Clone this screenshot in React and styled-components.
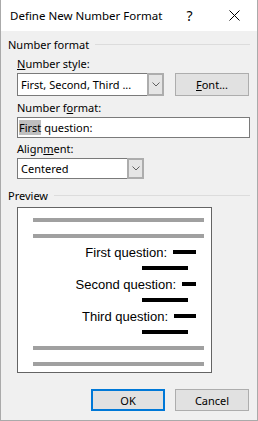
import { Fragment } from "react";
import styled, { createGlobalStyle } from "styled-components";

const GlobalStyle = createGlobalStyle`
  html, body {
    margin: 0;
    padding: 0;
    background: #ffffff;
  }
  * {
    box-sizing: border-box;
  }
`;

const Window = styled.div`
  width: 258px;
  height: 421px;
  background: #f0f0f0;
  border: 1px solid #aaaaaa;
  border-top: none;
  display: flex;
  flex-direction: column;
  font-family: "Noto Sans", "Open Sans", sans-serif;
  font-size: 11px;
  color: #000000;
`;

const TitleBar = styled.div`
  height: 31px;
  background: #ffffff;
  display: flex;
  align-items: center;
  padding-left: 9px;
`;

const Title = styled.div`
  flex: 1;
  line-height: 16px;
  font-size: 11.5px;
  white-space: nowrap;
`;

const TitleButton = styled.div`
  width: 45px;
  height: 31px;
  display: flex;
  align-items: center;
  justify-content: center;
  font-size: 14px;
`;

const Body = styled.div`
  flex: 1;
  display: flex;
  flex-direction: column;
  padding: 5px 7px 0 7px;
`;

const GroupHeader = styled.div`
  display: flex;
  align-items: center;
  height: 16px;
  margin-top: ${(p) => p.$top || 0}px;

  &::after {
    content: "";
    flex: 1;
    height: 1px;
    background: #dcdcdc;
    margin-left: 6px;
  }
`;

const Group = styled.div`
  display: flex;
  flex-direction: column;
  padding-left: 9px;
`;

const Label = styled.div`
  line-height: 16px;
  margin-top: ${(p) => p.$top || 0}px;
  margin-bottom: 1px;
`;

const Row = styled.div`
  display: flex;
  gap: 11px;
`;

const Combo = styled.div`
  width: ${(p) => p.$width}px;
  height: ${(p) => p.$height}px;
  display: flex;
  border: 1px solid #7a7a7a;
  background: #ffffff;
`;

const ComboValue = styled.div`
  flex: 1;
  display: flex;
  align-items: center;
  padding-left: 3px;
  white-space: nowrap;
  overflow: hidden;
`;

const DropButton = styled.div`
  width: 17px;
  margin: -1px -1px -1px 0;
  border: 2px solid #adadad;
  background: #e5e5e5;
  display: flex;
  align-items: center;
  justify-content: center;
`;

const Button = styled.div`
  width: 74px;
  height: ${(p) => p.$height || 22}px;
  background: #e1e1e1;
  border: ${(p) => (p.$default ? "2px solid #0078d7" : "1px solid #adadad")};
  display: flex;
  align-items: center;
  justify-content: center;
`;

const TextBox = styled.div`
  width: 233px;
  height: 21px;
  border: 1px solid #7a7a7a;
  background: #ffffff;
  display: flex;
  align-items: center;
  padding-left: 1px;
  white-space: nowrap;
`;

const Selected = styled.span`
  background: #bfbfbf;
`;

const PreviewBox = styled.div`
  width: 195px;
  height: 166px;
  margin-top: 4px;
  border: 1px solid #646464;
  background: #ffffff;
  padding: 4px 7px 0 15px;
  display: flex;
  flex-direction: column;
  font-family: "Liberation Sans", Arial, sans-serif;
  font-size: 13px;
`;

const Slot = styled.div`
  height: 16px;
  display: flex;
  align-items: center;
  justify-content: flex-end;
  padding-right: ${(p) => p.$right || 0}px;
  white-space: nowrap;
`;

const Bar = styled.div`
  height: 4px;
  width: ${(p) => (p.$width ? `${p.$width}px` : "100%")};
  background: ${(p) => (p.$gray ? "#a0a0a0" : "#000000")};
  margin-left: ${(p) => p.$gap || 0}px;
`;

const Footer = styled.div`
  margin-top: auto;
  display: flex;
  justify-content: flex-end;
  gap: 10px;
  padding: 0 1px 9px 0;
`;

const CloseIcon = () => (
  <svg width="11" height="11" viewBox="0 0 11 11">
    <path d="M0.5 0.5 L10.5 10.5 M10.5 0.5 L0.5 10.5" stroke="#000" strokeWidth="1" />
  </svg>
);

const Chevron = () => (
  <svg width="8" height="5" viewBox="0 0 8 5">
    <path d="M0.5 0.5 L4 4 L7.5 0.5" stroke="#606060" strokeWidth="1" fill="none" />
  </svg>
);

const items = [
  { text: "First question:", bar: 23 },
  { text: "Second question:", bar: 14 },
  { text: "Third question:", bar: 22 },
];

export default function App() {
  return (
    <>
      <GlobalStyle />
      <Window>
        <TitleBar>
          <Title>Define New Number Format</Title>
          <TitleButton>?</TitleButton>
          <TitleButton>
            <CloseIcon />
          </TitleButton>
        </TitleBar>
        <Body>
          <GroupHeader>Number format</GroupHeader>
          <Group>
            <Label $top={4}>
              <u>N</u>umber style:
            </Label>
            <Row>
              <Combo $width={147} $height={23}>
                <ComboValue>First, Second, Third ...</ComboValue>
                <DropButton>
                  <Chevron />
                </DropButton>
              </Combo>
              <Button $height={23}>
                <span>
                  <u>F</u>ont...
                </span>
              </Button>
            </Row>
            <Label $top={4}>
              Number f<u>o</u>rmat:
            </Label>
            <TextBox>
              <Selected>First</Selected>&nbsp;question:
            </TextBox>
            <Label $top={3}>
              Align<u>m</u>ent:
            </Label>
            <Combo $width={127} $height={21}>
              <ComboValue>Centered</ComboValue>
              <DropButton>
                <Chevron />
              </DropButton>
            </Combo>
          </Group>
          <GroupHeader $top={8}>Preview</GroupHeader>
          <Group>
            <PreviewBox>
              <Slot>
                <Bar $gray />
              </Slot>
              <Slot>
                <Bar $gray />
              </Slot>
              {items.map((it) => (
                <Fragment key={it.text}>
                  <Slot $right={8}>
                    {it.text}
                    <Bar $width={it.bar} $gap={6} />
                  </Slot>
                  <Slot $right={16}>
                    <Bar $width={46} />
                  </Slot>
                </Fragment>
              ))}
              <Slot>
                <Bar $gray />
              </Slot>
              <Slot>
                <Bar $gray />
              </Slot>
            </PreviewBox>
          </Group>
          <Footer>
            <Button $default>OK</Button>
            <Button>Cancel</Button>
          </Footer>
        </Body>
      </Window>
    </>
  );
}
